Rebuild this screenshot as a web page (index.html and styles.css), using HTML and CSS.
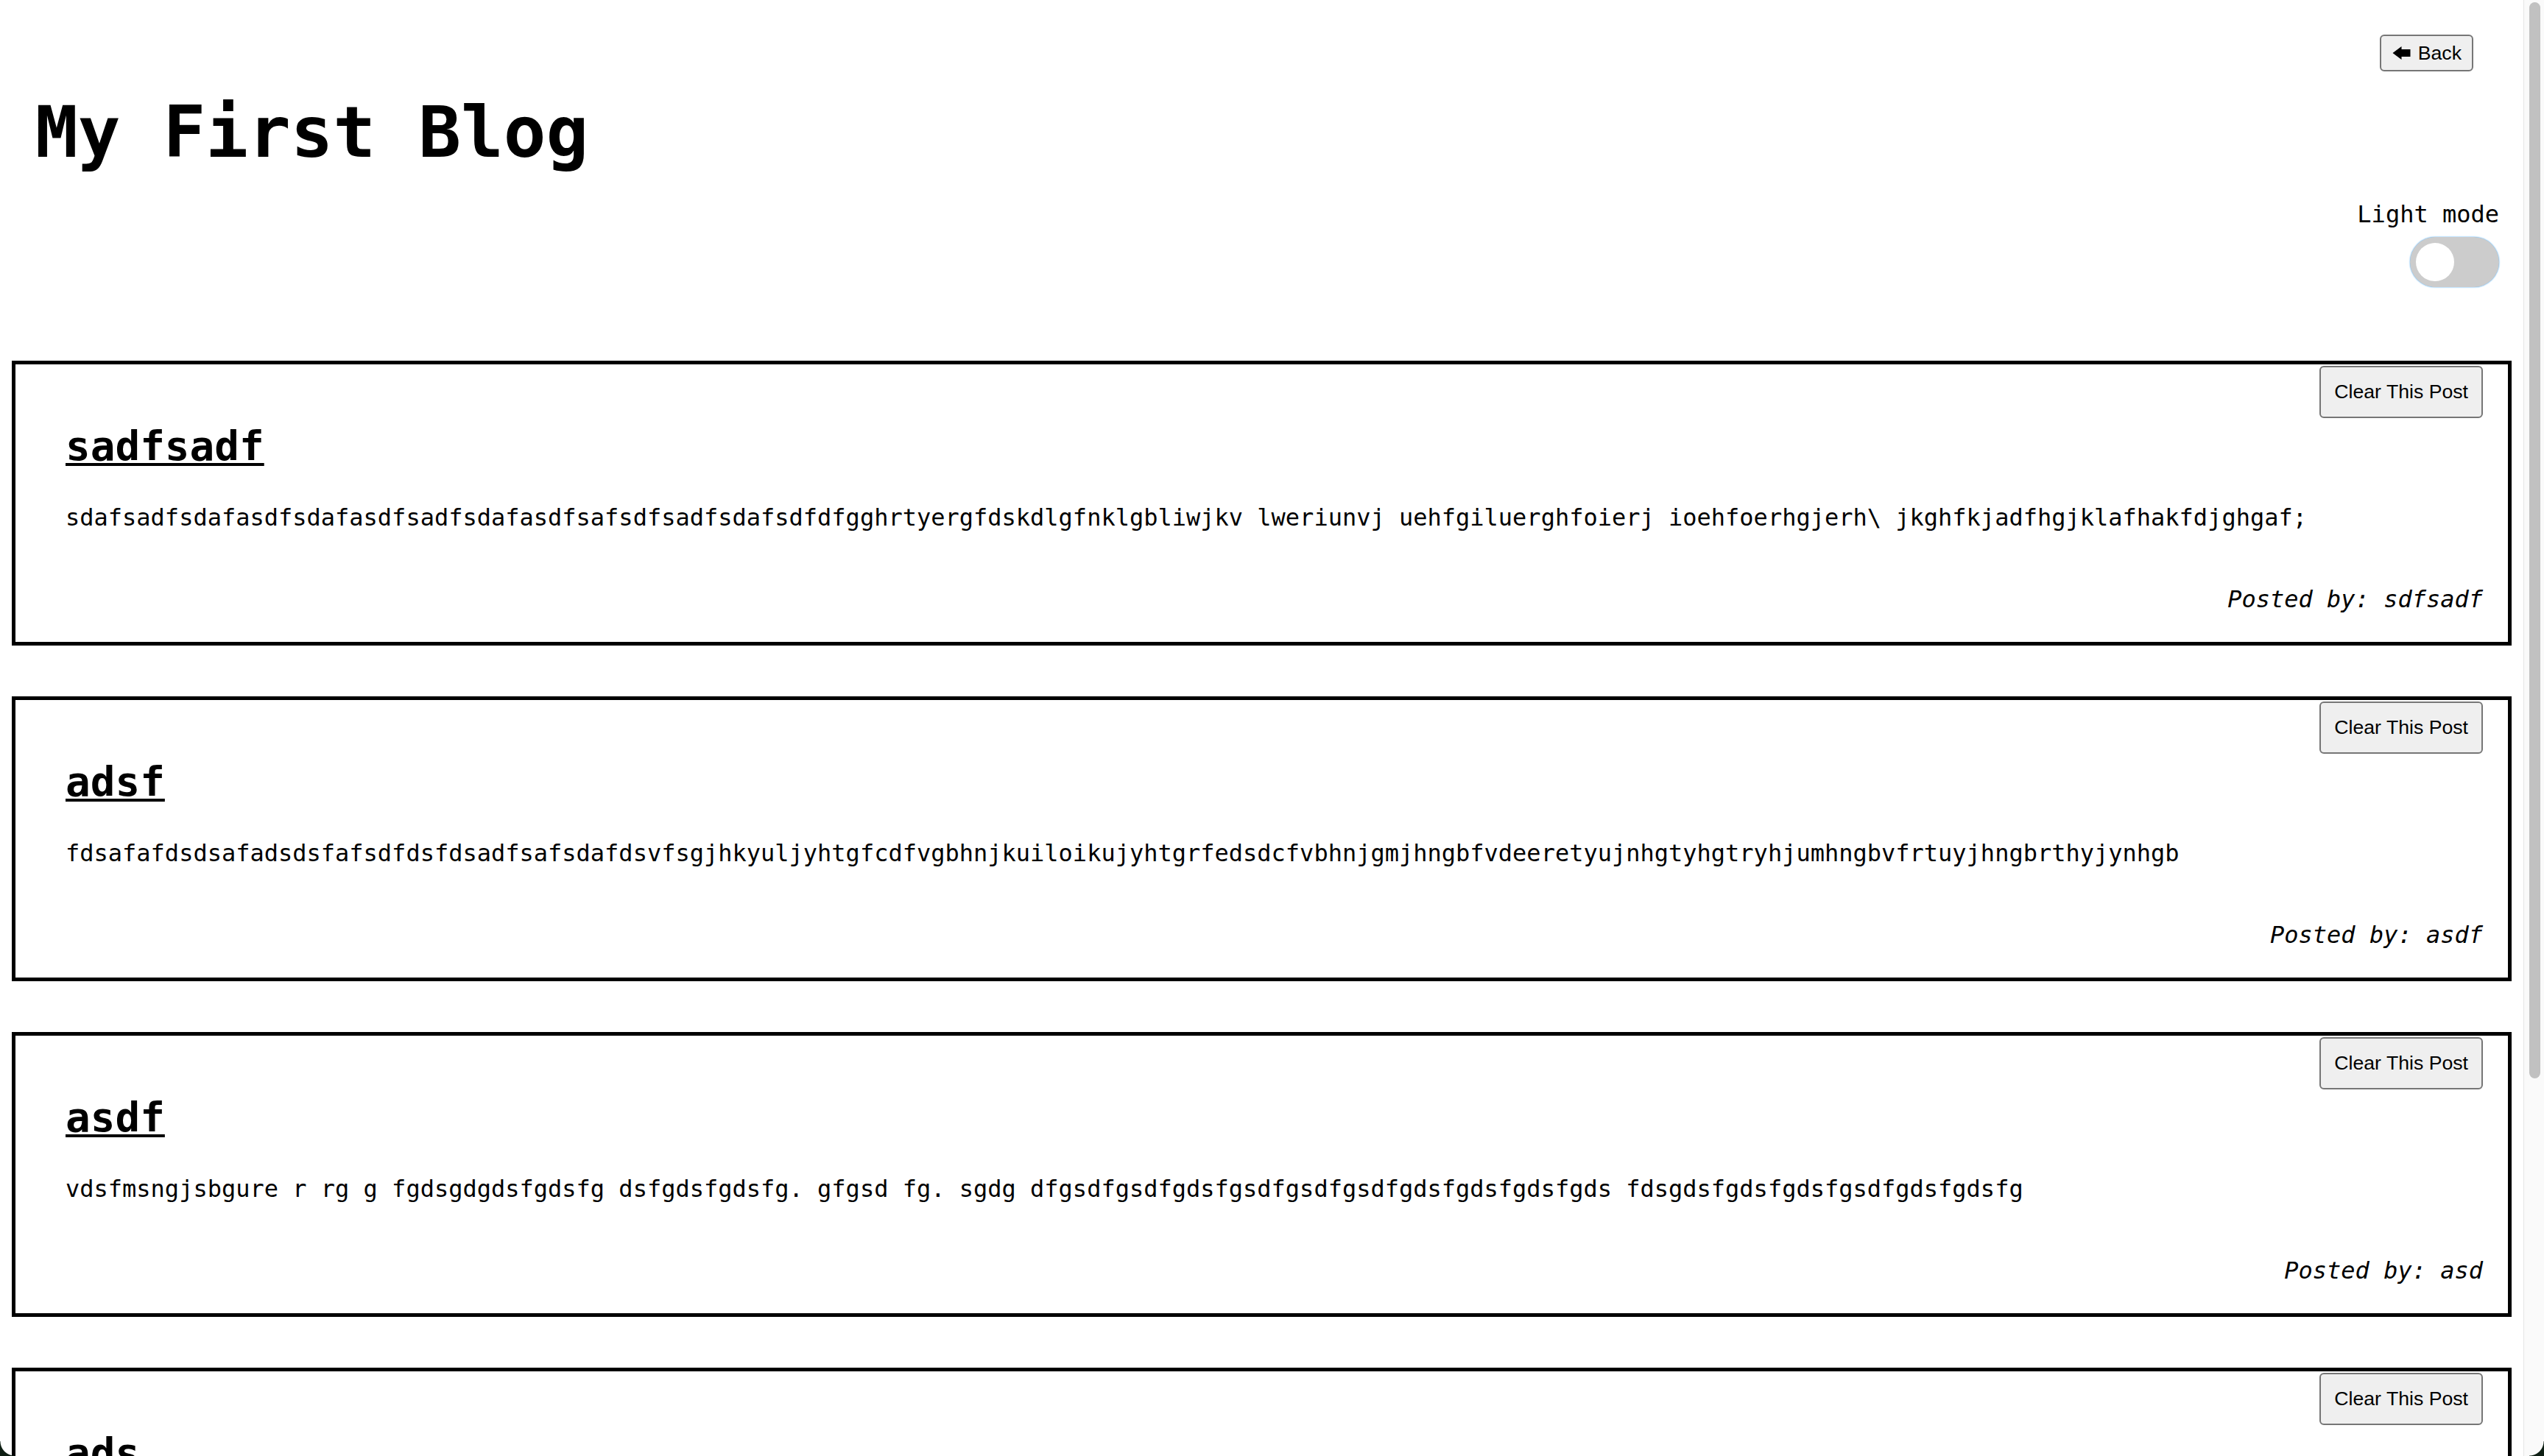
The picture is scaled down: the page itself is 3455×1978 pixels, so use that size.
FILE: index.html
```html
<!DOCTYPE html>
<html lang="en">
<head>
<meta charset="utf-8">
<title>My First Blog</title>
<link rel="stylesheet" href="styles.css">
</head>
<body>
<div class="page">
  <div class="topbar">
    <button class="back-btn" type="button">
      <svg class="back-icon" viewBox="0 0 24 18" width="24" height="18" aria-hidden="true"><polygon points="0,9 12,0 12,4 24,4 24,14 12,14 12,18" fill="#000"/></svg>
      <span>Back</span>
    </button>
  </div>
  <header class="header">
    <h1 class="site-title">My First Blog</h1>
    <div class="mode">
      <span class="mode-label">Light mode</span>
      <label class="switch"><span class="knob"></span></label>
    </div>
  </header>
  <main class="posts">
    <article class="post">
      <div class="post-top"><button class="clear-btn" type="button">Clear This Post</button></div>
      <h2 class="post-title"><a href="#">sadfsadf</a></h2>
      <p class="post-body">sdafsadfsdafasdfsdafasdfsadfsdafasdfsafsdfsadfsdafsdfdfgghrtyergfdskdlgfnklgbliwjkv lweriunvj uehfgiluerghfoierj ioehfoerhgjerh\ jkghfkjadfhgjklafhakfdjghgaf;</p>
      <p class="post-author">Posted by: sdfsadf</p>
    </article>
    <article class="post">
      <div class="post-top"><button class="clear-btn" type="button">Clear This Post</button></div>
      <h2 class="post-title"><a href="#">adsf</a></h2>
      <p class="post-body">fdsafafdsdsafadsdsfafsdfdsfdsadfsafsdafdsvfsgjhkyuljyhtgfcdfvgbhnjkuiloikujyhtgrfedsdcfvbhnjgmjhngbfvdeeretyujnhgtyhgtryhjumhngbvfrtuyjhngbrthyjynhgb</p>
      <p class="post-author">Posted by: asdf</p>
    </article>
    <article class="post">
      <div class="post-top"><button class="clear-btn" type="button">Clear This Post</button></div>
      <h2 class="post-title"><a href="#">asdf</a></h2>
      <p class="post-body">vdsfmsngjsbgure r rg g fgdsgdgdsfgdsfg dsfgdsfgdsfg. gfgsd fg. sgdg dfgsdfgsdfgdsfgsdfgsdfgsdfgdsfgdsfgdsfgds fdsgdsfgdsfgdsfgsdfgdsfgdsfg</p>
      <p class="post-author">Posted by: asd</p>
    </article>
    <article class="post">
      <div class="post-top"><button class="clear-btn" type="button">Clear This Post</button></div>
      <h2 class="post-title"><a href="#">ads</a></h2>
    </article>
  </main>
</div>
<div class="scrollbar"><div class="thumb"></div></div>
<div class="corner corner-left"></div>
<div class="corner corner-right"></div>
</body>
</html>
```

FILE: styles.css
```css
html, body {
  margin: 0;
  padding: 0;
  height: 100%;
  overflow: hidden;
  background: #fff;
}

body {
  display: flex;
  font-family: "DejaVu Sans Mono", "Liberation Mono", monospace;
  font-size: 32px;
  color: #000;
}

.page {
  flex: 1;
  min-width: 0;
  height: 100vh;
  overflow: hidden;
}

.topbar {
  display: flex;
  justify-content: flex-end;
  padding: 47px 68px 0 0;
}

.back-btn {
  display: flex;
  align-items: center;
  gap: 10px;
  height: 50px;
  padding: 0 14px 0 15px;
  border: 2px solid #767676;
  border-radius: 6px;
  background: #efefef;
  font-family: "Liberation Sans", Arial, sans-serif;
  font-size: 26.67px;
  color: #000;
}

.back-icon {
  display: block;
  width: 25px;
  height: 18px;
}

.header {
  display: flex;
  justify-content: space-between;
  align-items: flex-start;
  padding: 0 33px 0 48px;
}

.site-title {
  margin: 27px 0 0 0;
  font-size: 96px;
  font-weight: bold;
  line-height: 112px;
}

.mode {
  display: flex;
  flex-direction: column;
  align-items: flex-end;
  margin-top: 176px;
}

.mode-label {
  font-size: 32px;
  line-height: 37px;
}

.switch {
  display: block;
  position: relative;
  margin-top: 12px;
  width: 121px;
  height: 68px;
  border-radius: 34px;
  background: #ccc;
  box-shadow: 0 0 2px #2196F3;
}

.knob {
  position: absolute;
  left: 8px;
  top: 8px;
  width: 52px;
  height: 52px;
  border-radius: 50%;
  background: #fff;
}

.posts {
  display: flex;
  flex-direction: column;
  gap: 69px;
  padding: 0 16px;
  margin-top: 100px;
}

.post {
  border: 5px solid #000;
  padding: 2px 34px 39px 32px;
}

.post-top {
  display: flex;
  justify-content: flex-end;
}

.clear-btn {
  height: 71px;
  padding: 0 18px;
  border: 2px solid #767676;
  border-radius: 6px;
  background: #efefef;
  font-family: "Liberation Sans", Arial, sans-serif;
  font-size: 26.67px;
  color: #000;
}

.post-title {
  margin: 5px 0 0 36px;
  font-size: 56px;
  font-weight: bold;
  line-height: 65px;
}

.post-title a {
  color: #000;
  text-decoration: underline;
  text-decoration-thickness: 4px;
  text-underline-offset: 4px;
}

.post-body {
  margin: 47px 0 0 36px;
  line-height: 37px;
  white-space: nowrap;
}

.post-author {
  margin: 74px 0 0 0;
  line-height: 37px;
  text-align: right;
  font-style: italic;
}

.scrollbar {
  width: 28px;
  height: 100vh;
  box-sizing: border-box;
  background: #fafafa;
  border-left: 1px solid #e6e6e6;
  padding: 3px 0 0 7px;
}

.thumb {
  width: 15px;
  height: 1462px;
  border-radius: 8px;
  background: #c1c1c1;
}

.corner {
  position: fixed;
  bottom: 0;
  width: 20px;
  height: 20px;
}

.corner-left {
  left: 0;
  background: radial-gradient(circle at 20px 0, transparent 19px, #0e1f14 20px);
}

.corner-right {
  right: 0;
  background: radial-gradient(circle at 0 0, transparent 19px, #0e1f14 20px);
}
```
